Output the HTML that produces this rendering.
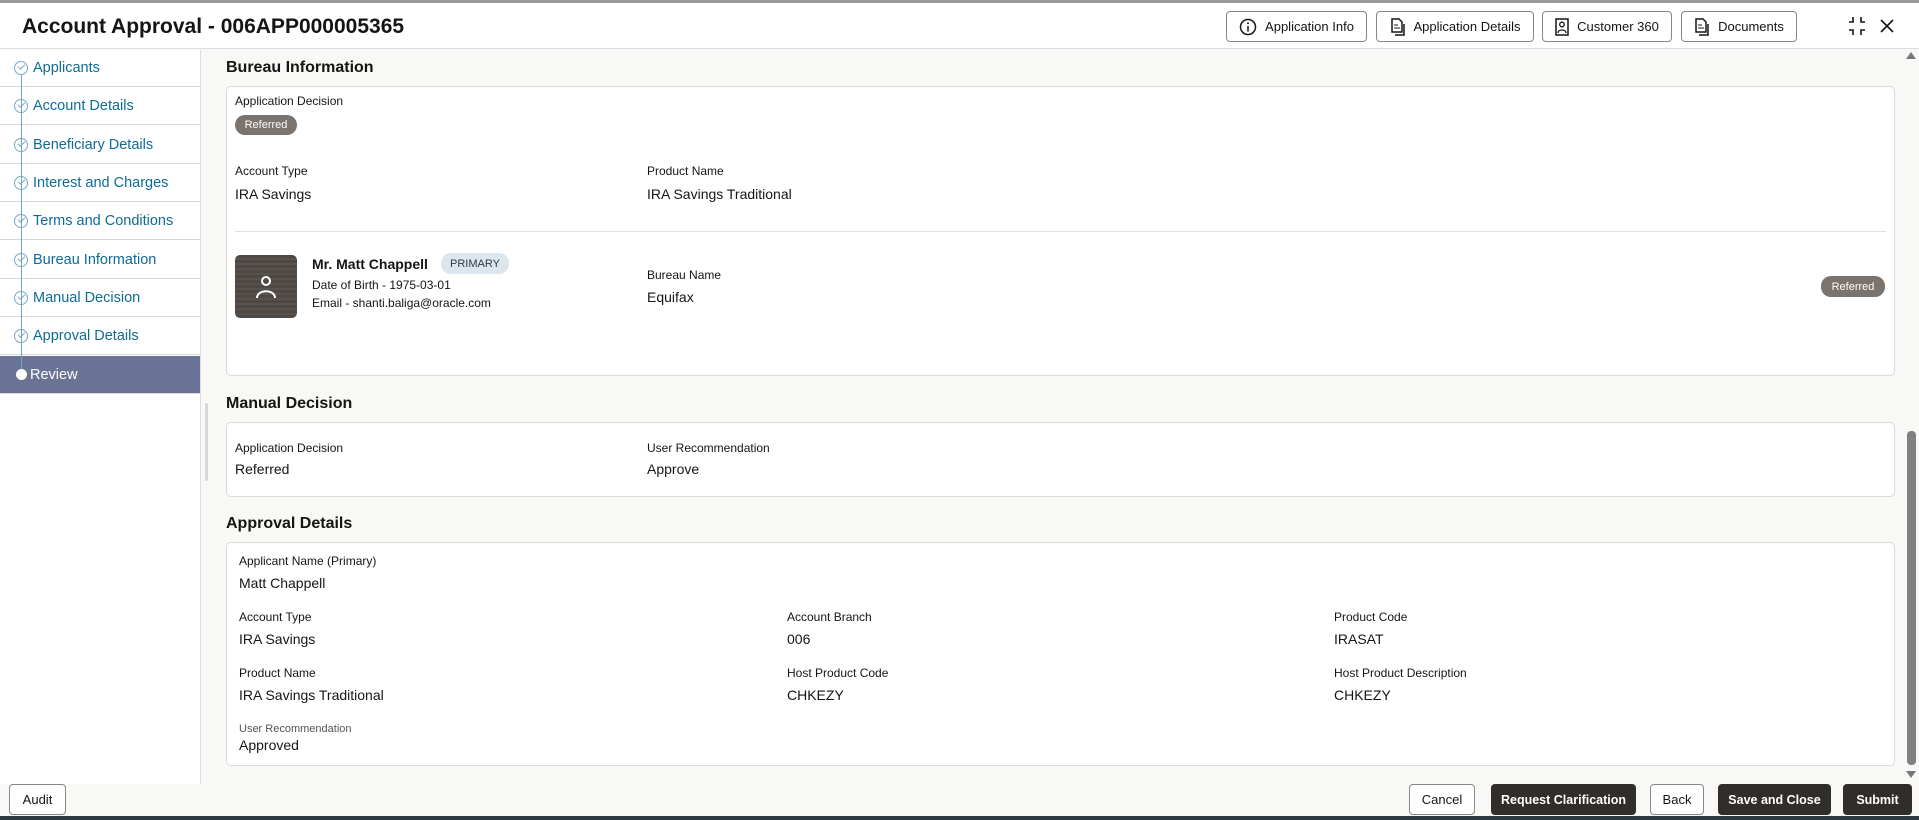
<!DOCTYPE html>
<html><head><meta charset="utf-8"><style>
*{box-sizing:border-box;margin:0;padding:0}
body{width:1919px;height:820px;overflow:hidden;font-family:"Liberation Sans",sans-serif;color:#161513;background:#f8f8f7;position:relative}
.a{position:absolute;white-space:nowrap}
.btn{position:absolute;border:1px solid #8a8784;border-radius:4px;background:#fff;font-size:13px;display:flex;align-items:center;justify-content:center;gap:8px}
.dk{background:#312d2a;color:#fff;border-color:#312d2a;font-weight:bold;font-size:12.5px}
.card{position:absolute;background:#fff;border:1px solid #dcdad7;border-radius:5px}
.h{font-size:16px;font-weight:bold;color:#161513}
.l{font-size:12px;color:#161513}
.v{font-size:14px;color:#161513}
.pill{position:absolute;border-radius:10px;background:#7a736e;color:#fff;font-size:11px;display:flex;align-items:center;justify-content:center}
.nav{position:absolute;left:0;width:200px;height:38px;border-bottom:1px solid #d6d6d6;font-size:14.5px;color:#0e6b96;padding-left:33px;line-height:38px}
.ic{position:absolute;left:14px;top:12px;width:14px;height:14px;border:1px solid #7aa9c4;border-radius:50%;background:#fff}
.ic:after{content:"";position:absolute;left:3px;top:2px;width:6px;height:3px;border-left:1px solid #7aa9c4;border-bottom:1px solid #7aa9c4;transform:rotate(-45deg)}
</style></head><body>
<div class="a" style="left:0;top:0;width:1919px;height:3px;background:#9a9a9a"></div>
<div class="a" style="left:0;top:3px;width:1919px;height:46px;background:#fff;border-bottom:1px solid #dedede"></div>
<div class="a" style="left:22px;top:15px;font-size:21px;font-weight:bold">Account Approval - 006APP000005365</div>
<div class="btn" style="left:1226px;top:11px;width:141px;height:31px"><svg width="18" height="18" viewBox="0 0 18 18"><circle cx="9" cy="9" r="7.5" fill="none" stroke="#161513" stroke-width="1.5"/><line x1="9" y1="8" x2="9" y2="13.5" stroke="#161513" stroke-width="1.5"/><circle cx="9" cy="5.3" r="1" fill="#161513"/></svg>Application Info</div>
<div class="btn" style="left:1376px;top:11px;width:158px;height:31px"><svg width="16" height="18" viewBox="0 0 16 18"><path d="M2 1h7l3 3v10H2z M5 17h9V6" fill="none" stroke="#161513" stroke-width="1.5"/><line x1="4" y1="7" x2="8" y2="7" stroke="#161513"/><line x1="4" y1="10" x2="10" y2="10" stroke="#161513"/></svg>Application Details</div>
<div class="btn" style="left:1542px;top:11px;width:130px;height:31px"><svg width="14" height="18" viewBox="0 0 14 18"><rect x="1" y="1" width="12" height="16" fill="none" stroke="#161513" stroke-width="1.5"/><circle cx="7" cy="6.5" r="2.3" fill="none" stroke="#161513" stroke-width="1.3"/><path d="M3 15c0-4 8-4 8 0" fill="none" stroke="#161513" stroke-width="1.3"/></svg>Customer 360</div>
<div class="btn" style="left:1681px;top:11px;width:116px;height:31px"><svg width="16" height="18" viewBox="0 0 16 18"><path d="M2 1h7l3 3v10H2z M5 17h9V6" fill="none" stroke="#161513" stroke-width="1.5"/><line x1="4" y1="7" x2="8" y2="7" stroke="#161513"/><line x1="4" y1="10" x2="10" y2="10" stroke="#161513"/></svg>Documents</div>
<svg class="a" style="left:1847px;top:15px" width="20" height="22" viewBox="0 0 20 22"><path d="M6 2v5H2M14 2v5h4M6 20v-5H2M14 20v-5h4" fill="none" stroke="#161513" stroke-width="1.6"/></svg>
<svg class="a" style="left:1880px;top:19px" width="14" height="14" viewBox="0 0 14 14"><path d="M1 1l12 12M13 1L1 13" stroke="#161513" stroke-width="1.6"/></svg>

<div class="a" style="left:0;top:50px;width:201px;height:734px;background:#fff;border-right:1px solid #dcdcdc"></div>
<div class="nav" style="top:49px"><span class="ic"></span>Applicants</div>
<div class="nav" style="top:87px"><span class="ic"></span>Account Details</div>
<div class="nav" style="top:126px"><span class="ic"></span>Beneficiary Details</div>
<div class="nav" style="top:164px"><span class="ic"></span>Interest and Charges</div>
<div class="nav" style="top:202px"><span class="ic"></span>Terms and Conditions</div>
<div class="nav" style="top:241px"><span class="ic"></span>Bureau Information</div>
<div class="nav" style="top:279px"><span class="ic"></span>Manual Decision</div>
<div class="nav" style="top:317px"><span class="ic"></span>Approval Details</div>
<div class="nav" style="top:356px;background:#6b7394;color:#fff;padding-left:30px"><span class="a" style="left:16px;top:13px;width:11px;height:11px;border-radius:50%;background:#fff"></span>Review</div>
<div class="a" style="left:21px;top:75px;width:1px;height:294px;background:#6fa6c8;z-index:0"></div>
<div class="a" style="left:205px;top:403px;width:3px;height:78px;background:#d8d8d8;border-radius:2px"></div>

<div class="a h" style="left:226px;top:59px">Bureau Information</div>
<div class="card" style="left:226px;top:86px;width:1669px;height:290px"></div>
<div class="a l" style="left:235px;top:94px">Application Decision</div>
<div class="pill" style="left:235px;top:115px;width:62px;height:20px">Referred</div>
<div class="a l" style="left:235px;top:164px">Account Type</div>
<div class="a v" style="left:235px;top:186px">IRA Savings</div>
<div class="a l" style="left:647px;top:164px">Product Name</div>
<div class="a v" style="left:647px;top:186px">IRA Savings Traditional</div>
<div class="a" style="left:235px;top:231px;width:1651px;height:1px;background:#e0e0e0"></div>
<div class="a" style="left:235px;top:255px;width:62px;height:63px;border-radius:5px;background:repeating-linear-gradient(0deg,#4d4843 0 3px,#57524c 3px 5px)"></div>
<svg class="a" style="left:254px;top:274px" width="24" height="26" viewBox="0 0 24 26"><circle cx="12" cy="7" r="4" fill="none" stroke="#fff" stroke-width="2"/><path d="M3 24c0-9 18-9 18 0" fill="none" stroke="#fff" stroke-width="2"/></svg>
<div class="a" style="left:312px;top:256px;font-size:14px;font-weight:bold">Mr. Matt Chappell</div>
<div class="pill" style="left:441px;top:253px;width:68px;height:21px;background:#dbe6ee;color:#2c3a45">PRIMARY</div>
<div class="a l" style="left:312px;top:278px">Date of Birth - 1975-03-01</div>
<div class="a l" style="left:312px;top:296px">Email - shanti.baliga@oracle.com</div>
<div class="a l" style="left:647px;top:268px">Bureau Name</div>
<div class="a v" style="left:647px;top:289px">Equifax</div>
<div class="pill" style="left:1821px;top:276px;width:64px;height:21px">Referred</div>

<div class="a h" style="left:226px;top:395px">Manual Decision</div>
<div class="card" style="left:226px;top:422px;width:1669px;height:75px"></div>
<div class="a l" style="left:235px;top:441px">Application Decision</div>
<div class="a v" style="left:235px;top:461px">Referred</div>
<div class="a l" style="left:647px;top:441px">User Recommendation</div>
<div class="a v" style="left:647px;top:461px">Approve</div>

<div class="a h" style="left:226px;top:515px">Approval Details</div>
<div class="card" style="left:226px;top:542px;width:1669px;height:224px"></div>
<div class="a l" style="left:239px;top:554px">Applicant Name (Primary)</div>
<div class="a v" style="left:239px;top:575px">Matt Chappell</div>
<div class="a l" style="left:239px;top:610px">Account Type</div>
<div class="a v" style="left:239px;top:631px">IRA Savings</div>
<div class="a l" style="left:787px;top:610px">Account Branch</div>
<div class="a v" style="left:787px;top:631px">006</div>
<div class="a l" style="left:1334px;top:610px">Product Code</div>
<div class="a v" style="left:1334px;top:631px">IRASAT</div>
<div class="a l" style="left:239px;top:666px">Product Name</div>
<div class="a v" style="left:239px;top:687px">IRA Savings Traditional</div>
<div class="a l" style="left:787px;top:666px">Host Product Code</div>
<div class="a v" style="left:787px;top:687px">CHKEZY</div>
<div class="a l" style="left:1334px;top:666px">Host Product Description</div>
<div class="a v" style="left:1334px;top:687px">CHKEZY</div>
<div class="a" style="left:239px;top:723px;font-size:11px;color:#555">User Recommendation</div>
<div class="a v" style="left:239px;top:737px">Approved</div>

<div class="a" style="left:1906px;top:52px;width:0;height:0;border-left:5px solid transparent;border-right:5px solid transparent;border-bottom:7px solid #777"></div>
<div class="a" style="left:1907px;top:431px;width:9px;height:334px;background:#808080;border-radius:4px"></div>
<div class="a" style="left:1906px;top:771px;width:0;height:0;border-left:5px solid transparent;border-right:5px solid transparent;border-top:7px solid #777"></div>

<div class="btn" style="left:9px;top:784px;width:57px;height:31px">Audit</div>
<div class="btn" style="left:1409px;top:784px;width:66px;height:31px">Cancel</div>
<div class="btn dk" style="left:1491px;top:784px;width:145px;height:31px">Request Clarification</div>
<div class="btn" style="left:1650px;top:784px;width:54px;height:31px">Back</div>
<div class="btn dk" style="left:1718px;top:784px;width:113px;height:31px">Save and Close</div>
<div class="btn dk" style="left:1843px;top:784px;width:69px;height:31px">Submit</div>
<div class="a" style="left:0;top:816px;width:1919px;height:4px;background:#2b3a40"></div>
</body></html>
